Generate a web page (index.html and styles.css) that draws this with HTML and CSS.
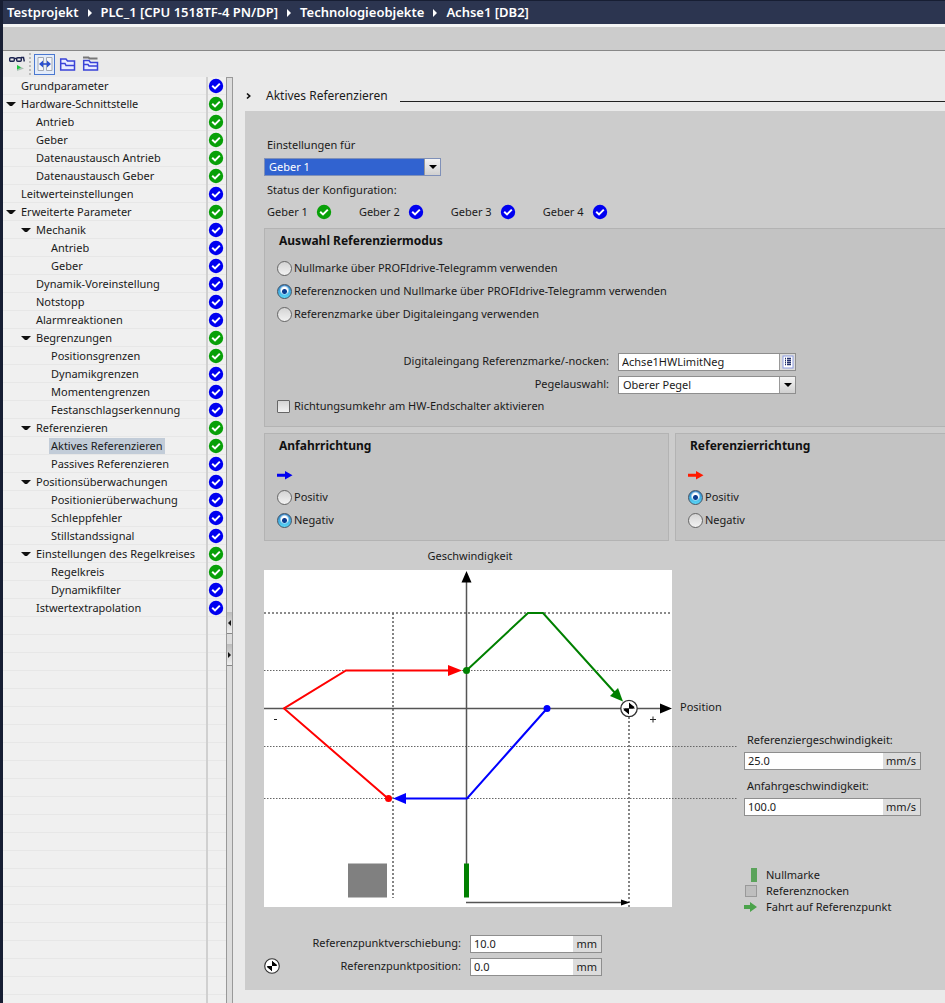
FILE: index.html
```html
<!DOCTYPE html>
<html lang="de">
<head>
<meta charset="utf-8">
<title>Achse1 [DB2] – Aktives Referenzieren</title>
<link rel="stylesheet" href="styles.css">
</head>
<body>
<svg class="defs" aria-hidden="true">
  <symbol id="ok" viewBox="0 0 16 16">
    <circle cx="8" cy="8" r="7.2" fill="currentColor"/>
    <path d="M4.2 7.8 7 10.4 11.8 5.6" fill="none" stroke="#fff" stroke-width="2"/>
  </symbol>
  <symbol id="arrow" viewBox="0 0 16 16">
    <path d="M0 6.7H8V4L15.5 8.2 8 12.5V9.8H0Z" fill="currentColor"/>
  </symbol>
  <symbol id="refpoint" viewBox="0 0 18 18">
    <circle cx="9" cy="9" r="8.2" fill="#fff" stroke="#333" stroke-width="1.3"/>
    <path d="M9 3 15 9H9V15L3 9H9Z" fill="#000"/>
    <path d="M9 3.500 14.500 7.500 13 9H9ZM9 14.500 3.500 10.500 5 9H9Z" fill="#000"/>
  </symbol>
</svg>

<header class="titlebar">
  <nav class="crumbs" aria-label="Pfad">
    <span>Testprojekt</span><i></i><span>PLC_1 [CPU 1518TF-4 PN/DP]</span><i></i><span>Technologieobjekte</span><i></i><span>Achse1 [DB2]</span>
  </nav>
</header>
<div class="strip"></div>

<div class="toolbar">
  <button class="tool" type="button" aria-label="Alle beobachten">
    <svg width="18" height="18" viewBox="0 0 18 18"><g fill="none" stroke="#1c2350" stroke-width="1.4"><rect x="1.7" y="2.7" width="4.6" height="3.6" rx="1"/><rect x="8.7" y="2.7" width="4.6" height="3.6" rx="1"/><path d="M6 3.5H9M13 2.5H15.5L16.3 6.5"/></g><path d="M9 10 16 13.5 9 16Z" fill="#a9bfb4"/><path d="M9 10 13 12.5 9 14.5Z" fill="#19c83a"/></svg>
  </button>
  <span class="divider"></span>
  <button class="tool tool-on" type="button" aria-label="Ansicht teilen">
    <svg width="18" height="18" viewBox="0 0 18 18"><path d="M2 2.500H7.500V15.500H2ZM10.500 2.500H16V15.500H10.500Z" fill="#f4f6fa" stroke="#a4a9b2"/><path d="M5 9H13" stroke="#2a4fd0" stroke-width="1.600"/><path d="M3 9 7 5.500V12.500ZM15 9 11 5.500V12.500Z" fill="#2a4fd0"/></svg>
  </button>
  <button class="tool" type="button" aria-label="Ordner öffnen">
    <svg width="18" height="18" viewBox="0 0 18 18"><path d="M1.700 15V4H7L8.500 6H15.500V15Z" fill="#e8ebff" stroke="#3a43d8" stroke-width="1.500"/><path d="M2 8.500H6L7 10.500H15.500" fill="none" stroke="#3a43d8" stroke-width="1.500"/></svg>
  </button>
  <button class="tool" type="button" aria-label="Alle Ordner">
    <svg width="18" height="18" viewBox="0 0 18 18"><path d="M1 2.500H6.500L7.500 3.500H15.500" fill="none" stroke="#777" stroke-width="1.800"/><path d="M1.700 15V5.500H7L8.500 7.500H15.500V15Z" fill="#e8ebff" stroke="#3a43d8" stroke-width="1.500"/><path d="M2 9.500H6L7 11H15.500" fill="none" stroke="#3a43d8" stroke-width="1.500"/></svg>
  </button>
</div>

<div class="workspace">
  <nav class="tree" aria-label="Parameter">
    <ul id="tree"></ul>
  </nav>
  <div class="splitter"><div class="grips"><button type="button" class="grip grip-left" aria-label="Einklappen"></button><button type="button" class="grip grip-right" aria-label="Ausklappen"></button></div></div>

  <main class="content">
    <div class="page-head">
      <svg width="6" height="8" viewBox="0 0 6 8"><path d="M1 1.500 3.700 4 1 6.500" fill="none" stroke="#111" stroke-width="1.700"/></svg>
      <h1>Aktives Referenzieren</h1>
      <span class="rule"></span>
    </div>

    <form class="form">
      <label class="indent" for="encoder">Einstellungen für</label>
      <span class="select encoder"><select id="encoder"><option>Geber 1</option><option>Geber 2</option><option>Geber 3</option><option>Geber 4</option></select></span>
      <p class="indent">Status der Konfiguration:</p>
      <ul class="indent status">
        <li>Geber 1 <svg class="ok green"><use href="#ok"/></svg></li>
        <li>Geber 2 <svg class="ok blue"><use href="#ok"/></svg></li>
        <li>Geber 3 <svg class="ok blue"><use href="#ok"/></svg></li>
        <li>Geber 4 <svg class="ok blue"><use href="#ok"/></svg></li>
      </ul>

      <section class="panel">
        <h2>Auswahl Referenziermodus</h2>
        <div class="options">
          <label><input type="radio" name="mode">Nullmarke über PROFIdrive-Telegramm verwenden</label>
          <label><input type="radio" name="mode" checked>Referenznocken und Nullmarke über PROFIdrive-Telegramm verwenden</label>
          <label><input type="radio" name="mode">Referenzmarke über Digitaleingang verwenden</label>
        </div>
        <div class="io-fields">
          <label for="din">Digitaleingang Referenzmarke/-nocken:</label>
          <span class="field tag"><input id="din" type="text" value="Achse1HWLimitNeg"><button type="button" aria-label="Variable wählen"><svg width="12" height="14" viewBox="0 0 12 14"><rect x="1" y="1" width="10" height="12" fill="#fff" stroke="#8c9be0"/><path d="M3 3.500H4M5 3.500H9M3 5.500H4M5 5.500H9M3 7.500H4M5 7.500H9M3 9.500H4M5 9.500H9" stroke="#23306e" stroke-width="1.300"/></svg></button></span>
          <label for="level">Pegelauswahl:</label>
          <span class="select"><select id="level"><option>Oberer Pegel</option><option>Unterer Pegel</option></select></span>
        </div>
        <label class="check"><input type="checkbox">Richtungsumkehr am HW-Endschalter aktivieren</label>
      </section>

      <div class="directions">
        <section class="panel">
          <h2>Anfahrrichtung</h2>
          <svg class="dir blue"><use href="#arrow"/></svg>
          <div class="options">
            <label><input type="radio" name="approach">Positiv</label>
            <label><input type="radio" name="approach" checked>Negativ</label>
          </div>
        </section>
        <section class="panel">
          <h2>Referenzierrichtung</h2>
          <svg class="dir red"><use href="#arrow"/></svg>
          <div class="options">
            <label><input type="radio" name="homing" checked>Positiv</label>
            <label><input type="radio" name="homing">Negativ</label>
          </div>
        </section>
      </div>

      <div class="diagram">
        <figure>
          <figcaption>Geschwindigkeit</figcaption>
          <svg width="474" height="337" viewBox="0 0 474 337" role="img" aria-label="Geschwindigkeit über Position">
            <rect width="408" height="337" fill="#fff"/>
            <g stroke="#666" fill="none">
              <path d="M0 43H408M129 43V328M365 147V337" stroke-width="1.600" stroke-dasharray="2 2"/>
              <path d="M0 100.500H408M0 176.500H474M0 228.500H474" stroke-dasharray="1.500 1.500"/>
            </g>
            <path d="M0 138.500H396M202.500 12V294M202 332.500H357" stroke="#555" stroke-width="1.500" fill="none"/>
            <path d="M202.500 1 207.500 12.500H197.500ZM408 138.500 396 133.500V143.500ZM366 332.500 357 329.500V335.500Z"/>
            <rect x="84" y="293.500" width="39" height="34" fill="#808080"/>
            <rect x="200" y="293.500" width="5" height="34" fill="#008000"/>
            <g fill="none" stroke-width="2">
              <path d="M124 228.500 20 138.500 82 100.500H186" stroke="#f00"/>
              <path d="M283 138.500 203 228.500H140" stroke="#00f"/>
              <path d="M202.500 100.500 264 43H279L352 124" stroke="#008000"/>
            </g>
            <path d="M198 100.500 184 95V106Z" fill="#f00"/>
            <path d="M129 228.500 142 223V234Z" fill="#00f"/>
            <path d="M359 131.500 346 126 354 118Z" fill="#008000"/>
            <circle cx="124.500" cy="228.500" r="3.500" fill="#f00"/>
            <circle cx="283" cy="138.500" r="3.500" fill="#00f"/>
            <circle cx="202.500" cy="100.500" r="3.500" fill="#008000"/>
            <use href="#refpoint" x="356" y="129.500" width="18" height="18"/>
            <path d="M10 149.500H13M386 149.500H392M389 146.500V152.500" stroke="#222" fill="none"/>
            <text x="416" y="141">Position</text>
          </svg>
        </figure>
        <div class="speeds">
          <label for="v1">Referenziergeschwindigkeit:</label>
          <span class="field"><input id="v1" type="text" value="25.0"><b>mm/s</b></span>
          <label for="v2">Anfahrgeschwindigkeit:</label>
          <span class="field"><input id="v2" type="text" value="100.0"><b>mm/s</b></span>
          <ul class="legend">
            <li><span class="key"><span class="mark"></span></span>Nullmarke</li>
            <li><span class="key"><span class="cam"></span></span>Referenznocken</li>
            <li><span class="key"><svg class="run" viewBox="0 0 13 14"><path d="M0 5H6V2L13 7 6 12V9H0Z" fill="currentColor"/></svg></span>Fahrt auf Referenzpunkt</li>
          </ul>
        </div>
      </div>

      <div class="refs">
        <span></span>
        <label for="shift">Referenzpunktverschiebung:</label>
        <span class="field"><input id="shift" type="text" value="10.0"><b>mm</b></span>
        <svg class="refpoint"><use href="#refpoint"/></svg>
        <label for="pos">Referenzpunktposition:</label>
        <span class="field"><input id="pos" type="text" value="0.0"><b>mm</b></span>
      </div>
    </form>
  </main>
</div>
<script src="tree.js"></script>
</body>
</html>
```
FILE: styles.css
```css
* { box-sizing: border-box; }

body {
  margin: 0;
  min-height: 100vh;
  display: flex;
  flex-direction: column;
  border-left: 3px solid #171e33;
  background: #eaeaea;
  color: #1a1a1a;
  font: 11px/16px "Noto Sans", "Open Sans", sans-serif;
  overflow-x: hidden;
}

h1, h2, p, ul, figure { margin: 0; padding: 0; }
ul { list-style: none; }
input, select, button { font: inherit; color: inherit; margin: 0; }
svg { display: block; flex: none; }
.defs { position: absolute; width: 0; height: 0; }

.green { color: #08a008; }
.blue { color: #0000f0; }
.red { color: #ff1a00; }
.ok { width: 16px; height: 16px; }

/* Title and toolbars */
.titlebar {
  height: 24px;
  background: #2c3550;
  border-top: 1px solid #171e33;
  color: #fff;
}
.crumbs {
  display: flex;
  align-items: center;
  padding-left: 4px;
  font-size: 13px;
  font-weight: 600;
  line-height: 23px;
  white-space: nowrap;
}
.crumbs i {
  margin: 0 9px;
  border: 4px solid transparent;
  border-left-color: #fff;
  border-right: 0;
}
.strip {
  height: 27px;
  background: #ccc;
  border-top: 3px solid #f4f4f4;
  border-bottom: 1px solid #888;
}
.toolbar {
  display: flex;
  align-items: center;
  gap: 2px;
  height: 26px;
  padding-left: 3px;
}
.tool {
  display: grid;
  place-items: center;
  width: 21px;
  height: 21px;
  padding: 0;
  border: 1px solid transparent;
  background: none;
}
.tool-on { border-color: #4a78d0; background: #e3ecfa; }
.divider { height: 22px; margin-right: 1px; border-left: 2px dotted #bbb; }

/* Parameter tree */
.workspace { display: flex; flex: 1; }
.tree {
  flex: none;
  width: 223px;
  background: repeating-linear-gradient(#f0f0f0 0 17px, #e7e7e7 17px 18px);
}
.tree ul {
  min-height: 100%;
  background: linear-gradient(#d0d0d0, #d0d0d0) 203px 0 / 2px 100% no-repeat;
}
.tree li {
  display: flex;
  align-items: center;
  height: 18px;
  padding-right: 2px;
}
.tree .arrow {
  width: 10px;
  margin-left: 3px;
  border: 4px solid transparent;
  border-bottom: 0;
}
.tree .open { border-top-color: #111; }
.tree .d1 { margin-left: 18px; }
.tree .d2 { margin-left: 33px; }
.tree a {
  margin-left: 3px;
  padding: 0 2px;
  color: inherit;
  text-decoration: none;
  white-space: nowrap;
}
.tree a[aria-current] { background: #c2ccd8; }
.tree .ok { margin-left: auto; }

.splitter {
  flex: none;
  width: 7px;
  background: #ddd;
  border: 1px solid #999;
  border-bottom: 0;
}
.grips { display: grid; gap: 10px; padding-top: 534px; }
.grip {
  display: grid;
  place-items: center;
  height: 22px;
  padding: 0;
  border: 0;
  border-bottom: 1px solid #888;
  background: linear-gradient(#bbb, #eee);
}
.grip::before { content: ""; border: 3px solid transparent; }
.grip-left::before { border-right-color: #111; border-left: 0; }
.grip-right::before { border-left-color: #111; border-right: 0; }

/* Page */
.content { flex: 1; min-width: 0; padding-left: 12px; }
.page-head {
  display: flex;
  align-items: center;
  height: 34px;
  padding: 3px 0 0 1px;
}
h1 { margin: 0 12px 0 14px; font-size: 12px; font-weight: 400; }
.rule { flex: 1; height: 12px; border-bottom: 1px solid #222; }

.form {
  display: flex;
  flex-direction: column;
  padding: 26px 0 14px 19px;
  background: #ccc;
}
.indent { padding-left: 3px; }
.encoder { width: 177px; margin: 5px 0 6px; }
.status { display: flex; gap: 27px; margin: 6px 0 8px; }
.status li { display: flex; gap: 8px; }

.panel {
  padding: 3px 12px 12px;
  border: 1px solid #b3b3b3;
  border-right-width: 0;
  background: #c3c3c3;
}
h2 { padding-left: 2px; font-size: 12px; font-weight: 700; line-height: 18px; color: #111; }
.options { display: grid; gap: 7px; margin-top: 10px; }
.options label, .check { display: flex; align-items: center; gap: 2px; }

input[type="radio"], input[type="checkbox"] {
  appearance: none;
  flex: none;
  width: 15px;
  height: 15px;
  border: 1px solid #666;
  border-radius: 50%;
  background: linear-gradient(#d4d4d4, #f2f2f2);
}
input[type="radio"]:checked {
  border-color: #456;
  background: radial-gradient(circle, #0a3c90 0 2px, transparent 3px), radial-gradient(circle at 50% 40%, #fff 3px, transparent 5px), linear-gradient(#2f7fc8, #58d8f8);
}
input[type="checkbox"] {
  width: 13px;
  height: 13px;
  margin-right: 2px;
  border-radius: 1px;
}

.io-fields {
  display: grid;
  grid-template-columns: 332px 178px;
  gap: 5px 9px;
  margin: 31px 0 4px;
}
.io-fields label, .refs label { text-align: right; }

.select { position: relative; display: block; height: 18px; }
.select select {
  appearance: none;
  width: 100%;
  height: 18px;
  padding: 0 20px 0 4px;
  border: 1px solid #8e8e8e;
  border-radius: 0;
  background: #fff;
}
.select::before {
  content: "";
  position: absolute;
  inset: 1px 1px 1px auto;
  width: 15px;
  border-left: 1px solid #999;
  background: linear-gradient(#f4f4f4, #d0d0d0);
  pointer-events: none;
}
.select::after {
  content: "";
  position: absolute;
  top: 7px;
  right: 4px;
  border: 4px solid transparent;
  border-top-color: #000;
  border-bottom: 0;
  pointer-events: none;
}
.encoder select { background: #3163d0; color: #fff; border-color: #7f90b8; }

.field {
  display: flex;
  height: 18px;
  border: 1px solid #8e8e8e;
  background: #fff;
}
.field input {
  flex: 1;
  min-width: 0;
  padding: 0 3px;
  border: 0;
  background: none;
}
.field b { padding: 0 4px 0 3px; background: #dcdcdc; font-weight: 400; }
.tag button {
  display: grid;
  place-items: center;
  width: 16px;
  padding: 0;
  border: 0;
  border-left: 1px solid #999;
  background: #ddd;
}

.directions {
  display: grid;
  grid-template-columns: 3fr 2fr;
  gap: 6px;
  margin: 6px 0 7px;
}
.directions .panel:first-child { border-right-width: 1px; }
.dir { width: 16px; height: 16px; margin-top: 12px; }
.directions .options { margin-top: 6px; }

/* Diagram */
.diagram { display: flex; gap: 6px; }
figcaption { width: 412px; margin-bottom: 6px; text-align: center; }
figure text { fill: #1a1a1a; }
.speeds { width: 177px; padding-top: 184px; }
.speeds label { display: block; padding-left: 3px; }
.speeds .field { margin: 4px 0 8px; }
.legend { padding-top: 43px; }
.legend li { display: flex; gap: 9px; white-space: nowrap; }
.key { display: grid; place-items: center; width: 13px; }
.mark { width: 6px; height: 14px; margin-left: 6px; background: #5ba35b; }
.cam { width: 12px; height: 12px; border: 1px solid #999; background: #bebebe; }
.run { width: 13px; height: 14px; color: #4ba34b; }

.refs {
  display: grid;
  grid-template-columns: 16px 172px 132px;
  gap: 5px 9px;
  margin-top: 20px;
}
.refpoint { width: 16px; height: 16px; }
```
FILE: tree.js
```js
const rows = [
  [0, "Grundparameter", "blue"],
  [0, "Hardware-Schnittstelle", "green", true],
  [1, "Antrieb", "green"],
  [1, "Geber", "green"],
  [1, "Datenaustausch Antrieb", "green"],
  [1, "Datenaustausch Geber", "green"],
  [0, "Leitwerteinstellungen", "blue"],
  [0, "Erweiterte Parameter", "green", true],
  [1, "Mechanik", "blue", true],
  [2, "Antrieb", "blue"],
  [2, "Geber", "blue"],
  [1, "Dynamik-Voreinstellung", "blue"],
  [1, "Notstopp", "blue"],
  [1, "Alarmreaktionen", "blue"],
  [1, "Begrenzungen", "green", true],
  [2, "Positionsgrenzen", "green"],
  [2, "Dynamikgrenzen", "blue"],
  [2, "Momentengrenzen", "blue"],
  [2, "Festanschlagserkennung", "blue"],
  [1, "Referenzieren", "green", true],
  [2, "Aktives Referenzieren", "green"],
  [2, "Passives Referenzieren", "blue"],
  [1, "Positionsüberwachungen", "blue", true],
  [2, "Positionierüberwachung", "blue"],
  [2, "Schleppfehler", "blue"],
  [2, "Stillstandssignal", "blue"],
  [1, "Einstellungen des Regelkreises", "green", true],
  [2, "Regelkreis", "green"],
  [2, "Dynamikfilter", "blue"],
  [1, "Istwertextrapolation", "blue"]
];
document.getElementById("tree").innerHTML = rows.map(([depth, name, color, open]) =>
  `<li><span class="arrow d${depth}${open ? " open" : ""}"></span>` +
  `<a href="#"${name === "Aktives Referenzieren" ? ' aria-current="page"' : ""}>${name}</a>` +
  `<svg class="ok ${color}"><use href="#ok"/></svg></li>`).join("");
```
